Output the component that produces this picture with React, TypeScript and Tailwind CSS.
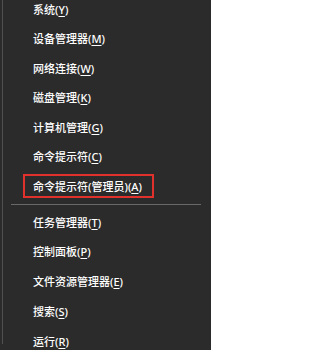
type Item = { label: string; key: string; highlight?: boolean };

const top: Item[] = [
  { label: "系统", key: "Y" },
  { label: "设备管理器", key: "M" },
  { label: "网络连接", key: "W" },
  { label: "磁盘管理", key: "K" },
  { label: "计算机管理", key: "G" },
  { label: "命令提示符", key: "C" },
  { label: "命令提示符(管理员)", key: "A", highlight: true },
];

const bottom: Item[] = [
  { label: "任务管理器", key: "T" },
  { label: "控制面板", key: "P" },
  { label: "文件资源管理器", key: "E" },
  { label: "搜索", key: "S" },
  { label: "运行", key: "R" },
];

function Label({ item }: { item: Item }) {
  return (
    <span className="whitespace-nowrap">
      {item.label}(<span className="underline underline-offset-2">{item.key}</span>)
    </span>
  );
}

function Row({ item, h }: { item: Item; h: string }) {
  return (
    <div className={`flex items-center ${h}`}>
      {item.highlight ? (
        <div className="ml-[23px] flex h-[24px] w-[131px] items-center border-2 border-[#e0312c] pl-[8px]">
          <Label item={item} />
        </div>
      ) : (
        <div className="pl-[33px]">
          <Label item={item} />
        </div>
      )}
    </div>
  );
}

export default function App() {
  return (
    <div
      className="h-[350px] w-[211px] overflow-hidden bg-[#2b2b2b] text-[11px] font-medium leading-none text-white"
      style={{ fontFamily: '"Noto Sans", "Noto Sans CJK SC", sans-serif' }}
    >
      <div className="ml-[2px] h-full border-l border-[#515151]">
        <div className="-ml-[3px] mt-[-5.75px]">
          {top.map((it) => (
            <Row key={it.key} item={it} h="h-[29.5px]" />
          ))}
          <div className="flex h-[6.5px] items-center pl-[11px] pr-[10px]">
            <div className="h-px w-full bg-[#686868]" />
          </div>
          {bottom.map((it) => (
            <Row key={it.key} item={it} h="h-[29.75px]" />
          ))}
        </div>
      </div>
    </div>
  );
}
